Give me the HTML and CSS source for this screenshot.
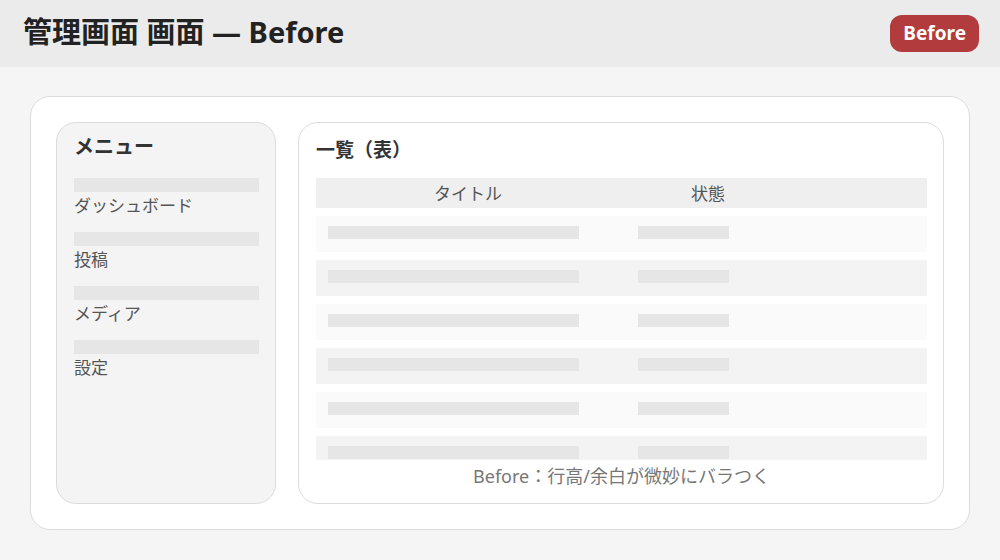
FILE: index.html
```html
<!DOCTYPE html>
<html lang="ja">
<head>
  <meta charset="UTF-8">
  <title>管理画面 画面 — Before</title>
  <link rel="stylesheet" href="styles.css">
</head>
<body>
  <header class="topbar">
    <h1>管理画面 画面 — Before</h1>
    <span class="badge">Before</span>
  </header>

  <div class="card">
    <aside class="sidebar">
      <div class="side-title">メニュー</div>
      <ul class="menu">
        <li><span class="menu-bar"></span><span class="menu-label">ダッシュボード</span></li>
        <li><span class="menu-bar"></span><span class="menu-label">投稿</span></li>
        <li><span class="menu-bar"></span><span class="menu-label">メディア</span></li>
        <li><span class="menu-bar"></span><span class="menu-label">設定</span></li>
      </ul>
    </aside>

    <main class="panel">
      <div class="panel-title">一覧（表）</div>
      <div class="table">
        <div class="table-head">
          <div class="th">タイトル</div>
          <div class="th">状態</div>
          <div class="th"></div>
        </div>
        <div class="table-body">
          <div class="tr"><span class="cell-title"></span><span class="cell-state"></span></div>
          <div class="tr"><span class="cell-title"></span><span class="cell-state"></span></div>
          <div class="tr"><span class="cell-title"></span><span class="cell-state"></span></div>
          <div class="tr"><span class="cell-title"></span><span class="cell-state"></span></div>
          <div class="tr"><span class="cell-title"></span><span class="cell-state"></span></div>
          <div class="tr"><span class="cell-title"></span><span class="cell-state"></span></div>
          <div class="tr"><span class="cell-title"></span><span class="cell-state"></span></div>
        </div>
      </div>
      <p class="note">Before：行高/余白が微妙にバラつく</p>
    </main>
  </div>
</body>
</html>
```

FILE: styles.css
```css
* {
  box-sizing: border-box;
}

body {
  margin: 0;
  background-color: #f5f5f5;
  color: #333;
  font-family: "Noto Sans", "Noto Sans CJK JP", sans-serif;
}

.topbar {
  height: 67px;
  background-color: #ebebeb;
  display: flex;
  align-items: center;
  justify-content: space-between;
  padding: 0 21px 0 23px;
}

.topbar h1 {
  margin: 0;
  padding-bottom: 4px;
  font-size: 29px;
  line-height: 36px;
  font-weight: bold;
  color: #222;
}

.badge {
  background-color: #b23b3d;
  color: #fff;
  font-weight: bold;
  font-size: 19px;
  line-height: 37px;
  height: 37px;
  padding: 0 13px;
  border-radius: 12px;
}

.card {
  margin: 29px 30px 0;
  height: 434px;
  background-color: #fff;
  border: 1px solid #dcdcdc;
  border-radius: 20px;
  padding: 25px;
  display: flex;
  gap: 22px;
}

.sidebar {
  width: 220px;
  flex-shrink: 0;
  background-color: #f4f4f4;
  border: 1px solid #dcdcdc;
  border-radius: 20px;
  padding: 11px 16px 0 17px;
}

.side-title {
  font-size: 20px;
  line-height: 26px;
  font-weight: bold;
  color: #333;
  margin: 0 0 18px 0;
}

.menu {
  list-style: none;
  margin: 0;
  padding: 0;
  display: flex;
  flex-direction: column;
  gap: 14px;
}

.menu li {
  display: flex;
  flex-direction: column;
}

.menu-bar {
  display: block;
  height: 14px;
  background-color: #e6e6e6;
}

.menu-label {
  padding-top: 2px;
  font-size: 17px;
  line-height: 24px;
  color: #555;
}

.panel {
  flex: 1;
  background-color: #fff;
  border: 1px solid #dcdcdc;
  border-radius: 20px;
  padding: 14px 16px 0 17px;
}

.panel-title {
  font-size: 19px;
  line-height: 26px;
  font-weight: bold;
  color: #333;
  margin-bottom: 15px;
}

.table {
  height: 282px;
  overflow: hidden;
}

.table-head,
.tr {
  display: grid;
  grid-template-columns: 304px 176px 1fr;
}

.table-head {
  height: 30px;
  background-color: #efefef;
  align-items: center;
  margin-bottom: 8px;
}

.th {
  text-align: center;
  font-size: 17px;
  line-height: 30px;
  padding-top: 1px;
  color: #555;
}

.table-body {
  display: flex;
  flex-direction: column;
  gap: 8px;
}

.tr {
  height: 36px;
  background-color: #fafafa;
  align-items: start;
  padding-top: 10px;
}

.tr:nth-child(even) {
  background-color: #f3f3f3;
}

.cell-title,
.cell-state {
  display: block;
  height: 13px;
  background-color: #e6e6e6;
}

.cell-title {
  width: 251px;
  margin-left: 12px;
}

.cell-state {
  width: 91px;
  margin-left: 18px;
}

.note {
  margin: 0;
  text-align: center;
  font-size: 18px;
  line-height: 32px;
  color: #777;
}
```
